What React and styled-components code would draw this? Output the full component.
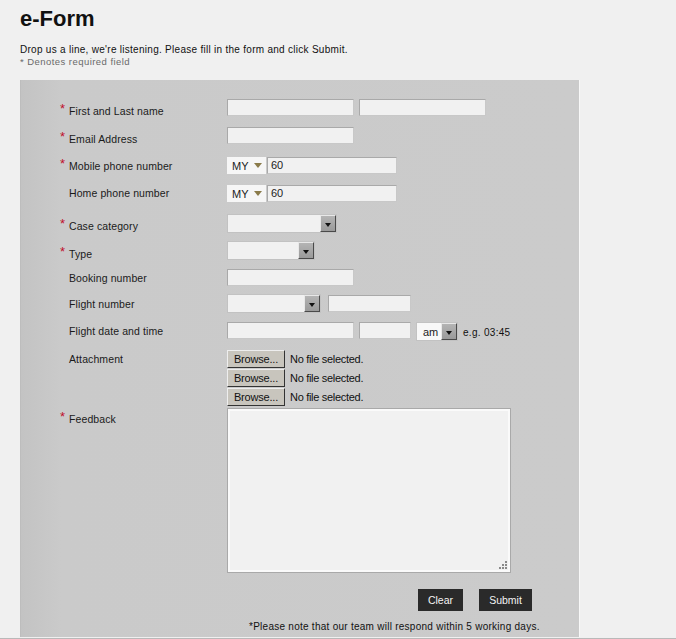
import React from "react";
import styled, { createGlobalStyle } from "styled-components";

const Global = createGlobalStyle`
  html, body { margin: 0; padding: 0; background: #f0f0f0; }
  body { font-family: "Liberation Sans", Arial, sans-serif; color: #111; }
`;

const Page = styled.div`
  width: 676px;
  height: 639px;
  overflow: hidden;
  background: #f0f0f0;
  border-bottom: 1px solid #b9b9b9;
  box-sizing: border-box;
`;

const Header = styled.header`
  padding-left: 20px;
`;

const Title = styled.h1`
  margin: 0;
  padding-top: 6px;
  font-size: 22px;
  line-height: 26px;
  font-weight: bold;
  color: #111;
`;

const Intro = styled.p`
  margin: 11px 0 0;
  font-size: 10px;
  line-height: 13px;
  letter-spacing: 0.28px;
  color: #111;
`;

const Denotes = styled.p`
  margin: 0;
  font-size: 9.5px;
  line-height: 11px;
  letter-spacing: 0.45px;
  font-weight: normal;
  color: #6a6a6a;
`;

const Panel = styled.form`
  margin: 13px 0 0 20px;
  width: 560px;
  height: 557px;
  box-sizing: border-box;
  padding: 19px 0 0 39px;
  background: linear-gradient(90deg, #c3c3c3 0px, #cacaca 40px, #cbcbcb 100%);
  border-left: 1px solid #bdbdbd;
  border-right: 1px solid #f8f8f8;
`;

const Row = styled.div`
  display: grid;
  grid-template-columns: 167px 1fr;
  height: ${(p) => p.$h}px;
`;

const Label = styled.div`
  padding-top: ${(p) => p.$off - 6}px;
  padding-left: ${(p) => (p.$req ? 0 : 9)}px;
  font-size: 10.5px;
  line-height: 12px;
  letter-spacing: 0.1px;
  color: #1a1a1a;
  white-space: nowrap;
`;

const Star = styled.span`
  display: inline-block;
  width: 9px;
  color: #c0102a;
  font-size: 13px;
  line-height: 8px;
  vertical-align: top;
`;

const Fields = styled.div`
  display: flex;
  align-items: flex-start;
  gap: ${(p) => p.$gap ?? 5}px;
`;

const Input = styled.div`
  width: ${(p) => p.$w}px;
  height: 17px;
  box-sizing: border-box;
  margin-top: ${(p) => p.$mt ?? 0}px;
  background: #f1f1f1;
  border: 1px solid #a9a9a9;
  border-right-color: #c8c8c8;
  border-bottom-color: #c8c8c8;
  font-size: 11px;
  line-height: 15px;
  padding-left: 3px;
  color: #222;
`;

const Country = styled.div`
  width: 39px;
  height: 17px;
  box-sizing: border-box;
  background: #f6f6f6;
  display: flex;
  align-items: center;
  padding-left: 5px;
  gap: 5px;
  font-size: 11px;
  color: #222;
`;

const Caret = styled.span`
  width: 0;
  height: 0;
  border-left: 4px solid transparent;
  border-right: 4px solid transparent;
  border-top: 5px solid #8a7b4a;
`;

const Select = styled.div`
  width: ${(p) => p.$w}px;
  height: 19px;
  box-sizing: border-box;
  background: ${(p) => (p.$light ? "#f8f8f8" : "#f1f1f1")};
  border: 1px solid #c2c2c2;
  display: flex;
  align-items: center;
  justify-content: space-between;
  padding-left: 6px;
  font-size: 11px;
  color: #222;
`;

const DropBtn = styled.span`
  width: 16px;
  height: 17px;
  box-sizing: border-box;
  background: linear-gradient(#b4b4b4, #9a9a9a);
  border: 1px solid;
  border-color: #e8e8e8 #4a4a4a #4a4a4a #e8e8e8;
  display: flex;
  align-items: center;
  justify-content: center;
  &::after {
    content: "";
    margin-top: 2px;
    border-left: 3px solid transparent;
    border-right: 3px solid transparent;
    border-top: 4px solid #111;
  }
`;

const Hint = styled.span`
  margin-top: 5px;
  font-size: 10px;
  letter-spacing: 0.3px;
  color: #111;
`;

const Files = styled.div`
  display: flex;
  flex-direction: column;
  gap: 1px;
`;

const FileRow = styled.div`
  display: flex;
  align-items: center;
  gap: 5px;
  height: 18px;
`;

const Browse = styled.span`
  width: 58px;
  height: 18px;
  box-sizing: border-box;
  background: #c8c5bd;
  border: 1px solid;
  border-color: #eeeeee #333 #333 #eeeeee;
  font-size: 11px;
  letter-spacing: -0.2px;
  line-height: 16px;
  text-align: center;
  color: #111;
`;

const FileText = styled.span`
  font-size: 11px;
  letter-spacing: -0.3px;
  color: #111;
`;

const TextArea = styled.div`
  position: relative;
  width: 284px;
  height: 165px;
  box-sizing: border-box;
  background: #f1f1f1;
  border: 1px solid #a9a9a9;
  box-shadow: inset 0 0 0 2px #fafafa;
`;

const Grip = styled.svg`
  position: absolute;
  right: 2px;
  bottom: 2px;
`;

const Actions = styled.div`
  display: flex;
  gap: 16px;
  padding-left: 358px;
`;

const Button = styled.span`
  width: ${(p) => p.$w}px;
  height: 22px;
  background: #2a2a2a;
  color: #f4f4f4;
  font-size: 10.5px;
  line-height: 22px;
  text-align: center;
`;

const Note = styled.p`
  margin: 9px 0 0 189px;
  font-size: 10px;
  line-height: 13px;
  color: #111;
  letter-spacing: 0.26px;
`;

const L = ({ req, off, children }) => (
  <Label $off={off} $req={req}>
    {req && <Star>*</Star>}
    {children}
  </Label>
);

export default function App() {
  return (
    <Page>
      <Global />
      <Header>
        <Title>e-Form</Title>
        <Intro>Drop us a line, we're listening. Please fill in the form and click Submit.</Intro>
        <Denotes>* Denotes required field</Denotes>
      </Header>
      <Panel>
        <Row $h={28}>
          <L req off={12}>First and Last name</L>
          <Fields>
            <Input $w={127} />
            <Input $w={127} />
          </Fields>
        </Row>
        <Row $h={30}>
          <L req off={12}>Email Address</L>
          <Fields>
            <Input $w={127} />
          </Fields>
        </Row>
        <Row $h={28}>
          <L req off={9}>Mobile phone number</L>
          <Fields $gap={1}>
            <Country>MY<Caret /></Country>
            <Input $w={130}>60</Input>
          </Fields>
        </Row>
        <Row $h={29}>
          <L off={8}>Home phone number</L>
          <Fields $gap={1}>
            <Country>MY<Caret /></Country>
            <Input $w={130}>60</Input>
          </Fields>
        </Row>
        <Row $h={27}>
          <L req off={12}>Case category</L>
          <Fields>
            <Select $w={110}><span /><DropBtn /></Select>
          </Fields>
        </Row>
        <Row $h={28}>
          <L req off={13}>Type</L>
          <Fields>
            <Select $w={88}><span /><DropBtn /></Select>
          </Fields>
        </Row>
        <Row $h={25}>
          <L off={9}>Booking number</L>
          <Fields>
            <Input $w={127} />
          </Fields>
        </Row>
        <Row $h={28}>
          <L off={10}>Flight number</L>
          <Fields $gap={7}>
            <Select $w={94}><span /><DropBtn /></Select>
            <Input $w={83} $mt={1} />
          </Fields>
        </Row>
        <Row $h={28}>
          <L off={9}>Flight date and time</L>
          <Fields>
            <Input $w={127} />
            <Input $w={52} />
            <Select $w={42} $light>am<DropBtn /></Select>
            <Hint>e.g. 03:45</Hint>
          </Fields>
        </Row>
        <Row $h={58}>
          <L off={9}>Attachment</L>
          <Files>
            {[0, 1, 2].map((i) => (
              <FileRow key={i}>
                <Browse>Browse...</Browse>
                <FileText>No file selected.</FileText>
              </FileRow>
            ))}
          </Files>
        </Row>
        <Row $h={181}>
          <L req off={11}>Feedback</L>
          <Fields>
            <TextArea>
              <Grip width="10" height="10" viewBox="0 0 10 10">
                <g fill="#8a8a8a">
                  <rect x="7" y="1" width="2" height="2" />
                  <rect x="4" y="4" width="2" height="2" />
                  <rect x="7" y="4" width="2" height="2" />
                  <rect x="1" y="7" width="2" height="2" />
                  <rect x="4" y="7" width="2" height="2" />
                  <rect x="7" y="7" width="2" height="2" />
                </g>
              </Grip>
            </TextArea>
          </Fields>
        </Row>
        <Actions>
          <Button $w={45}>Clear</Button>
          <Button $w={53}>Submit</Button>
        </Actions>
        <Note>*Please note that our team will respond within 5 working days.</Note>
      </Panel>
    </Page>
  );
}
